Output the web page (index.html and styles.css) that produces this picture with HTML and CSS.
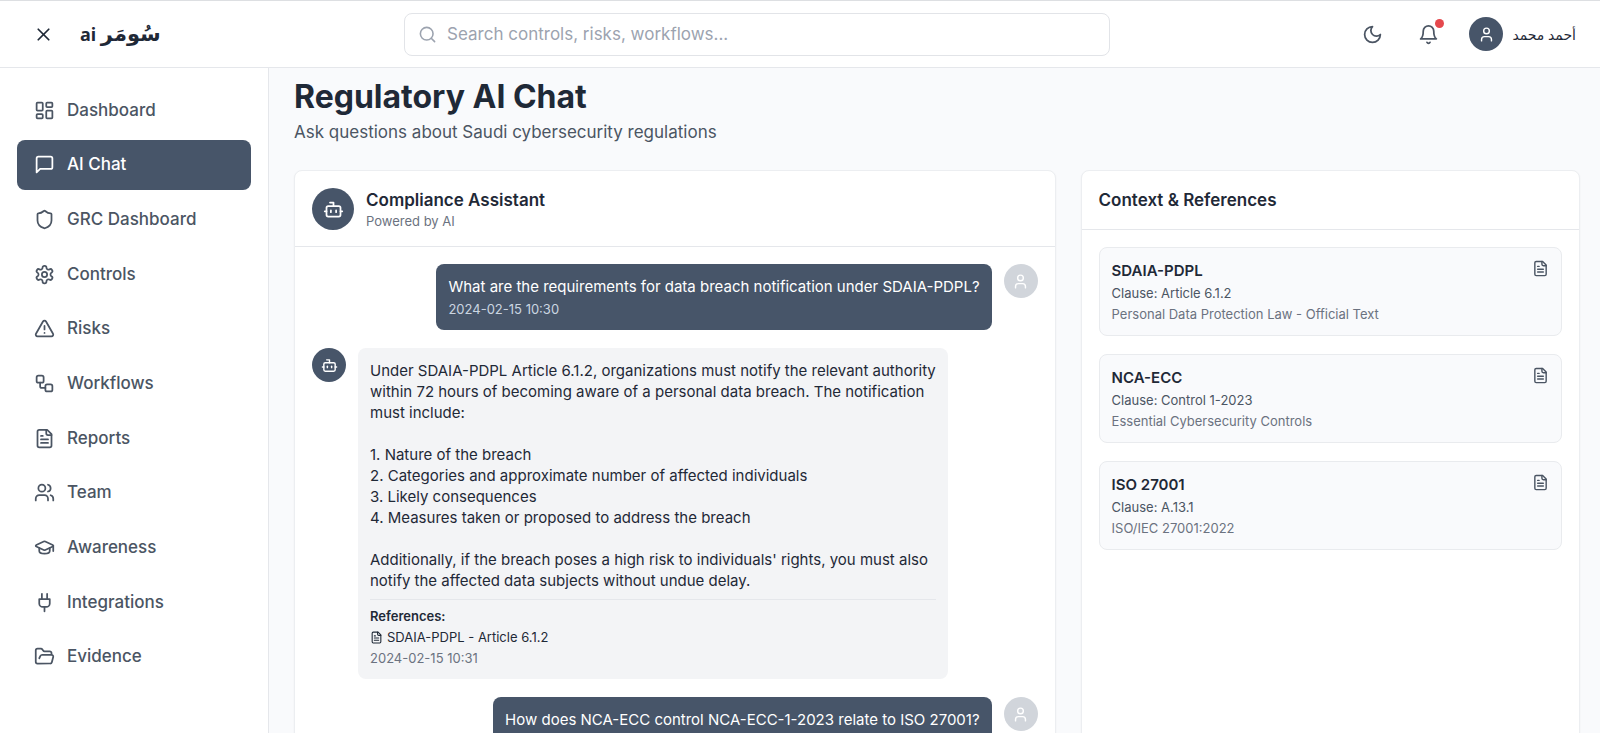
FILE: index.html
```html
<!DOCTYPE html>
<html lang="en">
<head>
    <meta charset="UTF-8">
    <meta name="viewport" content="width=device-width, initial-scale=1.0">
    <title>Regulatory AI Chat</title>
    <link rel="stylesheet" href="styles.css">
</head>
<body>

<!-- Shared icons -->
<svg class="sprite" aria-hidden="true">
    <symbol id="icon-user" viewBox="0 0 24 24"><path d="M19 21v-2a4 4 0 0 0-4-4H9a4 4 0 0 0-4 4v2"/><circle cx="12" cy="7" r="4"/></symbol>
    <symbol id="icon-bot" viewBox="0 0 24 24"><path d="M12 8V4H8"/><rect width="16" height="12" x="4" y="8" rx="2"/><path d="M2 14h2"/><path d="M20 14h2"/><path d="M15 13v2"/><path d="M9 13v2"/></symbol>
    <symbol id="icon-file" viewBox="0 0 24 24"><path d="M15 2H6a2 2 0 0 0-2 2v16a2 2 0 0 0 2 2h12a2 2 0 0 0 2-2V7Z"/><path d="M14 2v4a2 2 0 0 0 2 2h4"/><path d="M10 9H8"/><path d="M16 13H8"/><path d="M16 17H8"/></symbol>
</svg>

<header class="topbar">
    <div class="brand">
        <button type="button" class="icon-btn menu-btn" aria-label="Close menu">
            <svg class="icon" viewBox="0 0 24 24"><path d="M18 6 6 18"/><path d="m6 6 12 12"/></svg>
        </button>
        <a href="#" class="logo" dir="rtl"><span class="logo-ar" lang="ar">سُومَر</span> <span>ai</span></a>
    </div>

    <div class="search">
        <svg class="icon" viewBox="0 0 24 24"><circle cx="11" cy="11" r="8"/><path d="m21 21-4.3-4.3"/></svg>
        <input type="text" placeholder="Search controls, risks, workflows..." aria-label="Search">
    </div>

    <div class="actions">
        <button type="button" class="icon-btn" aria-label="Dark mode">
            <svg class="icon" viewBox="0 0 24 24"><path d="M12 3a6 6 0 0 0 9 9 9 9 0 1 1-9-9Z"/></svg>
        </button>
        <button type="button" class="icon-btn" aria-label="Notifications">
            <svg class="icon" viewBox="0 0 24 24"><path d="M6 8a6 6 0 0 1 12 0c0 7 3 9 3 9H3s3-2 3-9"/><path d="M10.3 21a1.94 1.94 0 0 0 3.4 0"/></svg>
            <span class="dot"></span>
        </button>
        <button type="button" class="profile">
            <span class="avatar"><svg class="icon icon-sm"><use href="#icon-user"/></svg></span>
            <span class="profile-name" lang="ar" dir="rtl">أحمد محمد</span>
        </button>
    </div>
</header>

<div class="layout">
    <nav class="sidebar">
        <ul class="nav-list">
            <li><a href="#" class="nav-item"><svg class="icon" viewBox="0 0 24 24"><rect width="7" height="9" x="3" y="3" rx="1"/><rect width="7" height="5" x="14" y="3" rx="1"/><rect width="7" height="9" x="14" y="12" rx="1"/><rect width="7" height="5" x="3" y="16" rx="1"/></svg>Dashboard</a></li>
            <li><a href="#" class="nav-item active"><svg class="icon" viewBox="0 0 24 24"><path d="M21 15a2 2 0 0 1-2 2H7l-4 4V5a2 2 0 0 1 2-2h14a2 2 0 0 1 2 2z"/></svg>AI Chat</a></li>
            <li><a href="#" class="nav-item"><svg class="icon" viewBox="0 0 24 24"><path d="M20 13c0 5-3.5 7.500-7.660 8.950a1 1 0 0 1-.67-.01C7.500 20.500 4 18 4 13V6a1 1 0 0 1 1-1c2 0 4.500-1.200 6.240-2.720a1.170 1.170 0 0 1 1.520 0C14.510 3.810 17 5 19 5a1 1 0 0 1 1 1z"/></svg>GRC Dashboard</a></li>
            <li><a href="#" class="nav-item"><svg class="icon" viewBox="0 0 24 24"><path d="M12.22 2h-.44a2 2 0 0 0-2 2v.18a2 2 0 0 1-1 1.730l-.43.25a2 2 0 0 1-2 0l-.15-.08a2 2 0 0 0-2.730.73l-.22.38a2 2 0 0 0 .73 2.730l.15.1a2 2 0 0 1 1 1.720v.51a2 2 0 0 1-1 1.740l-.15.09a2 2 0 0 0-.73 2.730l.22.38a2 2 0 0 0 2.730.73l.15-.08a2 2 0 0 1 2 0l.43.25a2 2 0 0 1 1 1.730V20a2 2 0 0 0 2 2h.44a2 2 0 0 0 2-2v-.18a2 2 0 0 1 1-1.730l.43-.25a2 2 0 0 1 2 0l.15.08a2 2 0 0 0 2.730-.73l.22-.39a2 2 0 0 0-.73-2.730l-.15-.08a2 2 0 0 1-1-1.740v-.5a2 2 0 0 1 1-1.740l.15-.09a2 2 0 0 0 .73-2.730l-.22-.38a2 2 0 0 0-2.730-.73l-.15.08a2 2 0 0 1-2 0l-.43-.25a2 2 0 0 1-1-1.730V4a2 2 0 0 0-2-2z"/><circle cx="12" cy="12" r="3"/></svg>Controls</a></li>
            <li><a href="#" class="nav-item"><svg class="icon" viewBox="0 0 24 24"><path d="m21.730 18-8-14a2 2 0 0 0-3.480 0l-8 14A2 2 0 0 0 4 21h16a2 2 0 0 0 1.730-3"/><path d="M12 9v4"/><path d="M12 17h.01"/></svg>Risks</a></li>
            <li><a href="#" class="nav-item"><svg class="icon" viewBox="0 0 24 24"><rect width="8" height="8" x="3" y="3" rx="2"/><path d="M7 11v4a2 2 0 0 0 2 2h4"/><rect width="8" height="8" x="13" y="13" rx="2"/></svg>Workflows</a></li>
            <li><a href="#" class="nav-item"><svg class="icon"><use href="#icon-file"/></svg>Reports</a></li>
            <li><a href="#" class="nav-item"><svg class="icon" viewBox="0 0 24 24"><path d="M16 21v-2a4 4 0 0 0-4-4H6a4 4 0 0 0-4 4v2"/><circle cx="9" cy="7" r="4"/><path d="M22 21v-2a4 4 0 0 0-3-3.870"/><path d="M16 3.130a4 4 0 0 1 0 7.750"/></svg>Team</a></li>
            <li><a href="#" class="nav-item"><svg class="icon" viewBox="0 0 24 24"><path d="M21.420 10.922a1 1 0 0 0-.019-1.838L12.830 5.180a2 2 0 0 0-1.660 0L2.600 9.080a1 1 0 0 0 0 1.832l8.570 3.908a2 2 0 0 0 1.660 0z"/><path d="M22 10v6"/><path d="M6 12.500V16a6 3 0 0 0 12 0v-3.500"/></svg>Awareness</a></li>
            <li><a href="#" class="nav-item"><svg class="icon" viewBox="0 0 24 24"><path d="M12 22v-5"/><path d="M9 8V2"/><path d="M15 8V2"/><path d="M18 8v5a4 4 0 0 1-4 4h-4a4 4 0 0 1-4-4V8Z"/></svg>Integrations</a></li>
            <li><a href="#" class="nav-item"><svg class="icon" viewBox="0 0 24 24"><path d="m6 14 1.500-2.900A2 2 0 0 1 9.240 10H20a2 2 0 0 1 1.940 2.500l-1.540 6a2 2 0 0 1-1.950 1.500H4a2 2 0 0 1-2-2V5a2 2 0 0 1 2-2h3.900a2 2 0 0 1 1.690.9l.81 1.200a2 2 0 0 0 1.670.9H18a2 2 0 0 1 2 2v2"/></svg>Evidence</a></li>
        </ul>
    </nav>

    <main class="content">
        <h1>Regulatory AI Chat</h1>
        <p class="subtitle">Ask questions about Saudi cybersecurity regulations</p>

        <div class="panels">
            <section class="panel chat">
                <div class="panel-header">
                    <span class="avatar avatar-lg"><svg class="icon"><use href="#icon-bot"/></svg></span>
                    <div>
                        <h2>Compliance Assistant</h2>
                        <p class="powered">Powered by AI</p>
                    </div>
                </div>

                <div class="messages">
                    <div class="message user">
                        <div class="bubble">
                            <p>What are the requirements for data breach notification under SDAIA-PDPL?</p>
                            <time>2024-02-15 10:30</time>
                        </div>
                        <span class="avatar"><svg class="icon icon-sm"><use href="#icon-user"/></svg></span>
                    </div>

                    <div class="message bot">
                        <span class="avatar"><svg class="icon icon-sm"><use href="#icon-bot"/></svg></span>
                        <div class="bubble">
                            <p>Under SDAIA-PDPL Article 6.1.2, organizations must notify the relevant authority within 72 hours of becoming aware of a personal data breach. The notification must include:

1. Nature of the breach
2. Categories and approximate number of affected individuals
3. Likely consequences
4. Measures taken or proposed to address the breach

Additionally, if the breach poses a high risk to individuals' rights, you must also notify the affected data subjects without undue delay.</p>
                            <div class="refs">
                                <strong>References:</strong>
                                <span class="ref"><svg class="icon icon-xs"><use href="#icon-file"/></svg>SDAIA-PDPL - Article 6.1.2</span>
                            </div>
                            <time>2024-02-15 10:31</time>
                        </div>
                    </div>

                    <div class="message user">
                        <div class="bubble">
                            <p>How does NCA-ECC control NCA-ECC-1-2023 relate to ISO 27001?</p>
                            <time>2024-02-15 10:32</time>
                        </div>
                        <span class="avatar"><svg class="icon icon-sm"><use href="#icon-user"/></svg></span>
                    </div>
                </div>
            </section>

            <section class="panel context">
                <div class="panel-header">
                    <h2>Context &amp; References</h2>
                </div>
                <div class="cards">
                    <article class="card">
                        <div>
                            <h3>SDAIA-PDPL</h3>
                            <p>Clause: Article 6.1.2</p>
                            <p class="source">Personal Data Protection Law - Official Text</p>
                        </div>
                        <svg class="icon icon-sm"><use href="#icon-file"/></svg>
                    </article>
                    <article class="card">
                        <div>
                            <h3>NCA-ECC</h3>
                            <p>Clause: Control 1-2023</p>
                            <p class="source">Essential Cybersecurity Controls</p>
                        </div>
                        <svg class="icon icon-sm"><use href="#icon-file"/></svg>
                    </article>
                    <article class="card">
                        <div>
                            <h3>ISO 27001</h3>
                            <p>Clause: A.13.1</p>
                            <p class="source">ISO/IEC 27001:2022</p>
                        </div>
                        <svg class="icon icon-sm"><use href="#icon-file"/></svg>
                    </article>
                </div>
            </section>
        </div>
    </main>
</div>

</body>
</html>
```
FILE: styles.css
```css
* {
    box-sizing: border-box;
    margin: 0;
    padding: 0;
}

body {
    display: flex;
    flex-direction: column;
    height: 100vh;
    overflow: hidden;
    font-family: Inter, "DejaVu Sans", sans-serif;
    font-size: 17px;
    line-height: 25px;
    color: #1f2937;
    background: #f9fafc;
}

button {
    font: inherit;
    color: inherit;
    background: none;
    border: none;
    cursor: pointer;
}

a {
    color: inherit;
    text-decoration: none;
}

.sprite {
    display: none;
}

.icon {
    display: block;
    flex-shrink: 0;
    width: 21px;
    height: 21px;
    fill: none;
    stroke: currentColor;
    stroke-width: 2;
    stroke-linecap: round;
    stroke-linejoin: round;
}

.icon-sm {
    width: 17px;
    height: 17px;
}

.icon-xs {
    width: 13px;
    height: 13px;
}

.avatar {
    display: flex;
    flex-shrink: 0;
    align-items: center;
    justify-content: center;
    width: 34px;
    height: 34px;
    border-radius: 50%;
    color: #ffffff;
    background: #475569;
}

.avatar-lg {
    width: 42px;
    height: 42px;
}

/* Top bar */
.topbar {
    display: flex;
    flex-shrink: 0;
    align-items: center;
    justify-content: space-between;
    height: 68px;
    padding: 0 24px;
    background: #ffffff;
    border-top: 1px solid #dddfe2;
    border-bottom: 1px solid #e5e7eb;
}

.brand,
.actions {
    display: flex;
    align-items: center;
    gap: 17px;
}

.icon-btn {
    position: relative;
    padding: 9px;
    color: #4b5563;
}

.menu-btn {
    color: #1f2937;
}

.logo {
    font-family: "Noto Sans", "DejaVu Sans", sans-serif;
    font-size: 18px;
    font-weight: 700;
}

.logo-ar {
    font-family: "DejaVu Sans", sans-serif;
    font-size: 21px;
}

.search {
    display: flex;
    flex: 0 1 706px;
    align-items: center;
    gap: 10px;
    height: 43px;
    padding: 0 13px;
    color: #9ca3af;
    border: 1px solid #e2e4e8;
    border-radius: 8px;
}

.search .icon {
    width: 19px;
    height: 19px;
}

.search input {
    flex: 1;
    min-width: 0;
    font: inherit;
    color: #1f2937;
    background: none;
    border: none;
    outline: none;
}

.search input::placeholder {
    color: #9ca3af;
}

.dot {
    position: absolute;
    top: 4px;
    right: 4px;
    width: 9px;
    height: 9px;
    border-radius: 50%;
    background: #e5484d;
}

.profile {
    display: flex;
    align-items: center;
    gap: 9px;
    padding-left: 4px;
}

.profile-name {
    font-family: "Noto Sans", "DejaVu Sans", sans-serif;
    font-size: 14px;
    font-weight: 500;
}

/* Sidebar */
.layout {
    display: flex;
    flex: 1;
    min-height: 0;
}

.sidebar {
    flex-shrink: 0;
    width: 269px;
    padding: 17px;
    background: #ffffff;
    border-right: 1px solid #e5e7eb;
}

.nav-list {
    display: flex;
    flex-direction: column;
    justify-content: space-between;
    height: 597px;
    list-style: none;
}

.nav-item {
    display: flex;
    align-items: center;
    gap: 12px;
    height: 50px;
    padding: 0 17px;
    border-radius: 8px;
    font-weight: 500;
    color: #4b5563;
}

.nav-item.active {
    color: #ffffff;
    background: #475569;
}

/* Content */
.content {
    flex: 1;
    min-width: 0;
    padding: 10px 20px 25px 25px;
    overflow: hidden;
}

h1 {
    font-size: 32px;
    line-height: 38px;
    font-weight: 700;
}

h2 {
    font-size: 17px;
    line-height: 25px;
    font-weight: 600;
}

h3 {
    font-size: 15px;
    line-height: 21px;
    font-weight: 600;
}

.subtitle {
    margin: 4px 0 25px;
    color: #4b5563;
}

.panels {
    display: grid;
    grid-template-columns: repeat(5, 1fr);
    gap: 25px;
}

.panel {
    background: #ffffff;
    border: 1px solid #eceef1;
    border-radius: 8px;
    box-shadow: 0 1px 2px rgba(0, 0, 0, 0.05);
}

.chat {
    grid-column: span 3;
}

.context {
    grid-column: span 2;
}

.panel-header {
    display: flex;
    align-items: center;
    gap: 12px;
    padding: 17px 17px 16px;
    border-bottom: 1px solid #e5e7eb;
}

.powered {
    font-size: 13px;
    line-height: 17px;
    color: #6b7280;
}

/* Messages */
.messages {
    display: flex;
    flex-direction: column;
    gap: 18px;
    padding: 17px;
}

.message {
    display: flex;
    align-items: flex-start;
    gap: 12px;
}

.message.user {
    justify-content: flex-end;
}

.message.user .avatar {
    background: #d1d5db;
}

.bubble {
    max-width: 590px;
    padding: 12px;
    border-radius: 8px;
    font-size: 15px;
    line-height: 21px;
    background: #f3f4f6;
}

.bubble p {
    white-space: pre-line;
}

.user .bubble {
    color: #ffffff;
    background: #475569;
}

.bubble time {
    display: block;
    margin-top: 4px;
    font-size: 13px;
    line-height: 17px;
    color: #6b7280;
}

.user .bubble time {
    color: #cbd5e1;
}

.refs {
    display: flex;
    flex-direction: column;
    gap: 4px;
    margin-top: 8px;
    padding-top: 8px;
    border-top: 1px solid #e5e7eb;
    font-size: 13px;
    line-height: 17px;
}

.refs strong {
    font-weight: 600;
}

.ref {
    display: flex;
    align-items: center;
    gap: 4px;
}

/* References */
.cards {
    display: flex;
    flex-direction: column;
    gap: 18px;
    padding: 17px;
}

.card {
    display: flex;
    justify-content: space-between;
    padding: 12px;
    font-size: 13px;
    line-height: 17px;
    color: #4b5563;
    background: #f9fafc;
    border: 1px solid #e9ebee;
    border-radius: 8px;
}

.card h3 {
    color: #1f2937;
}

.card p {
    margin-top: 4px;
}

.card .source {
    color: #6b7280;
}
```
